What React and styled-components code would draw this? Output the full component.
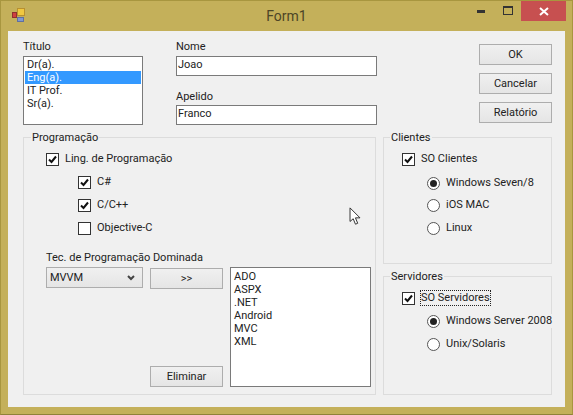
import styled, { createGlobalStyle } from "styled-components";

const Global = createGlobalStyle`
  html, body { margin: 0; padding: 0; background: #c4b05a; }
  * { box-sizing: border-box; }
`;

const Window = styled.div`
  position: relative;
  width: 573px;
  height: 415px;
  background: #c4b05a;
  border: 1px solid #a8963f;
  border-bottom-color: #8f8238;
  font-family: Roboto, "Liberation Sans", Arial, sans-serif;
  font-size: 11px;
  color: #222;
  display: flex;
  flex-direction: column;
  overflow: hidden;
`;

const TitleBar = styled.div`
  height: 29px;
  flex: none;
  display: grid;
  grid-template-columns: 1fr auto 1fr;
  align-items: start;
`;

const AppIcon = styled.svg`
  width: 16px;
  height: 16px;
  margin: 6px 0 0 10px;
`;

const Title = styled.div`
  font-size: 14px;
  line-height: 30px;
  color: #4d4526;
`;

const Controls = styled.div`
  display: flex;
  align-items: flex-start;
  justify-self: end;
  margin-right: 6px;
`;

const Control = styled.div`
  width: ${(p) => p.$w}px;
  height: 20px;
  display: flex;
  align-items: center;
  justify-content: center;
  background: ${(p) => p.$bg || "transparent"};
`;

const Client = styled.div`
  flex: 1;
  margin: 1px 7px 7px 7px;
  background: #f0f0f0;
  padding: 13px 13px 12px 15px;
  display: flex;
  flex-direction: column;
  gap: 12px;
`;

const TopRow = styled.div`
  display: flex;
  height: 81px;
  flex: none;
`;

const TitleCol = styled.div`
  width: 120px;
  display: flex;
  flex-direction: column;
  justify-content: flex-end;
`;

const FieldCol = styled.div`
  width: 201px;
  margin-left: 33px;
  display: flex;
  flex-direction: column;
  justify-content: flex-end;
`;

const Label = styled.label`
  display: block;
  flex: none;
  height: 13px;
  line-height: 13px;
  margin-top: ${(p) => p.$mt ?? 0}px;
  margin-bottom: ${(p) => p.$mb ?? 0}px;
`;

const TextBox = styled.div`
  height: 20px;
  flex: none;
  border: 1px solid #7a7a7a;
  background: #fff;
  padding-left: 1px;
  line-height: 16px;
`;

const ListBox = styled.div`
  height: ${(p) => p.$h}px;
  width: ${(p) => p.$w || "auto"};
  border: 1px solid #7a7a7a;
  background: #fff;
  padding: ${(p) => p.$pt ?? 1}px 1px 1px;
  line-height: 13px;
  flex: none;
`;

const ListItem = styled.div`
  padding-left: 2px;
  background: ${(p) => (p.$selected ? "#3399ff" : "transparent")};
  color: ${(p) => (p.$selected ? "#fff" : "inherit")};
`;

const ButtonCol = styled.div`
  width: 73px;
  margin-left: 102px;
  display: flex;
  flex-direction: column;
  gap: 8px;
`;

const Button = styled.div`
  width: 73px;
  height: 21px;
  border: 1px solid #adadad;
  background: linear-gradient(#f0f0f0, #e5e5e5);
  display: flex;
  align-items: center;
  justify-content: center;
  flex: none;
`;

const BottomRow = styled.div`
  flex: 1;
  display: flex;
  gap: 7px;
  min-height: 0;
`;

const Group = styled.div`
  border: 1px solid #dcdcdc;
  flex: ${(p) => (p.$h ? "none" : 1)};
  height: ${(p) => (p.$h ? `${p.$h}px` : "auto")};
  padding: 0 3px 0 ${(p) => p.$pl}px;
`;

const Legend = styled.div`
  width: max-content;
  margin: -7px 0 0 ${(p) => p.$ml}px;
  padding: 0 1px;
  height: 13px;
  line-height: 13px;
  background: #f0f0f0;
`;

const SideCol = styled.div`
  width: 169px;
  flex: none;
  display: flex;
  flex-direction: column;
  gap: 12px;
`;

const Row = styled.div`
  display: flex;
  align-items: center;
  height: 14px;
  margin-top: ${(p) => p.$mt ?? 9}px;
  margin-left: ${(p) => p.$ml ?? 0}px;
`;

const CheckBox = styled.span`
  width: 13px;
  height: 13px;
  flex: none;
  border: 1px solid #333;
  background: #fff;
  display: flex;
  align-items: center;
  justify-content: center;
`;

const RadioDot = styled.span`
  width: 13px;
  height: 13px;
  flex: none;
  border: 1px solid #555;
  border-radius: 50%;
  background: #fff;
  display: flex;
  align-items: center;
  justify-content: center;
  &::after {
    content: "";
    width: 7px;
    height: 7px;
    border-radius: 50%;
    background: ${(p) => (p.$on ? "#222" : "transparent")};
  }
`;

const RowText = styled.span`
  margin-left: ${(p) => p.$ml}px;
  line-height: 14px;
  white-space: nowrap;
  background: #f0f0f0;
  outline: ${(p) => (p.$focus ? "1px dotted #222" : "none")};
`;

const TechRow = styled.div`
  display: flex;
  gap: 7px;
  height: 120px;
  margin-top: 3px;
`;

const Combo = styled.div`
  width: 97px;
  height: 21px;
  border: 1px solid #adadad;
  background: linear-gradient(#f0f0f0, #e5e5e5);
  display: flex;
  align-items: center;
  justify-content: space-between;
  padding: 0 7px 0 3px;
  flex: none;
`;

const MidCol = styled.div`
  width: 73px;
  padding-top: 1px;
  display: flex;
  flex-direction: column;
  justify-content: space-between;
`;

const Cursor = styled.svg`
  position: absolute;
  left: 348px;
  top: 206px;
  width: 12px;
  height: 19px;
`;

const Tick = () => (
  <svg width="11" height="11" viewBox="0 0 11 11">
    <path d="M2 5.5 L4.5 8 L9 2.5" fill="none" stroke="#111" strokeWidth="2" />
  </svg>
);

const Check = ({ on, text, ml, mt, focus, gap = 6 }) => (
  <Row $ml={ml} $mt={mt}>
    <CheckBox>{on && <Tick />}</CheckBox>
    <RowText $ml={gap} $focus={focus}>{text}</RowText>
  </Row>
);

const Radio = ({ on, text, mt }) => (
  <Row $ml={25} $mt={mt}>
    <RadioDot $on={on} />
    <RowText $ml={6}>{text}</RowText>
  </Row>
);

const techs = ["ADO", "ASPX", ".NET", "Android", "MVC", "XML"];
const titles = ["Dr(a).", "Eng(a).", "IT Prof.", "Sr(a)."];

export default function App() {
  return (
    <>
      <Global />
      <Window>
        <TitleBar>
          <AppIcon viewBox="0 0 16 16">
            <rect x="6.5" y="1.5" width="7" height="7" fill="#f0c840" stroke="#b89030" />
            <rect x="1.5" y="5.5" width="4" height="5" fill="#d04040" stroke="#903030" />
            <rect x="6.5" y="10.5" width="6" height="4" fill="#8098d0" stroke="#6070a0" />
          </AppIcon>
          <Title>Form1</Title>
          <Controls>
            <Control $w={27}>
              <svg width="9" height="4" viewBox="0 0 9 4"><rect y="1" width="8" height="3" fill="#333" /></svg>
            </Control>
            <Control $w={26}>
              <svg width="11" height="10" viewBox="0 0 11 10">
                <rect x="0.5" y="0.5" width="9" height="8" fill="none" stroke="#333" />
                <rect x="0" y="0" width="10" height="2" fill="#333" />
              </svg>
            </Control>
            <Control $w={45} $bg="#c75050">
              <svg width="10" height="9" viewBox="0 0 10 9">
                <path d="M1 1 L9 8 M9 1 L1 8" stroke="#fff" strokeWidth="2" />
              </svg>
            </Control>
          </Controls>
        </TitleBar>
        <Client>
          <TopRow>
            <TitleCol>
              <Label $mb={3}>Título</Label>
              <ListBox $h={69}>
                {titles.map((t) => (
                  <ListItem key={t} $selected={t === "Eng(a)."}>{t}</ListItem>
                ))}
              </ListBox>
            </TitleCol>
            <FieldCol>
              <Label $mb={3}>Nome</Label>
              <TextBox>Joao</TextBox>
              <Label $mt={14} $mb={2}>Apelido</Label>
              <TextBox>Franco</TextBox>
            </FieldCol>
            <ButtonCol>
              <Button>OK</Button>
              <Button>Cancelar</Button>
              <Button>Relatório</Button>
            </ButtonCol>
          </TopRow>
          <BottomRow>
            <Group $pl={22}>
              <Legend $ml={-15}>Programação</Legend>
              <Check on text="Ling. de Programação" mt={8} />
              <Check on text="C#" ml={32} />
              <Check on text="C/C++" ml={32} />
              <Check text="Objective-C" ml={32} />
              <Label $mt={16}>Tec. de Programação Dominada</Label>
              <TechRow>
                <Combo>
                  MVVM
                  <svg width="8" height="6" viewBox="0 0 8 6">
                    <path d="M1 1 L4 4 L7 1" fill="none" stroke="#444" strokeWidth="2" />
                  </svg>
                </Combo>
                <MidCol>
                  <Button>&gt;&gt;</Button>
                  <Button>Eliminar</Button>
                </MidCol>
                <ListBox $h={120} $w="141px" $pt={2}>
                  {techs.map((t) => (
                    <ListItem key={t}>{t}</ListItem>
                  ))}
                </ListBox>
              </TechRow>
            </Group>
            <SideCol>
              <Group $pl={18} $h={127}>
                <Legend $ml={-12}>Clientes</Legend>
                <Check on text="SO Clientes" mt={8} />
                <Radio on text="Windows Seven/8" mt={10} />
                <Radio text="iOS MAC" mt={8} />
                <Radio text="Linux" />
              </Group>
              <Group $pl={18} $h={119}>
                <Legend $ml={-12}>Servidores</Legend>
                <Check on text="SO Servidores" mt={8} focus />
                <Radio on text="Windows Server 2008" mt={9} />
                <Radio text="Unix/Solaris" />
              </Group>
            </SideCol>
          </BottomRow>
        </Client>
        <Cursor viewBox="0 0 13 21">
          <path d="M1 1 L1 16 L4.5 13 L7 19 L9.5 18 L7 12 L12 12 Z" fill="#fff" stroke="#222" strokeWidth="1" />
        </Cursor>
      </Window>
    </>
  );
}
